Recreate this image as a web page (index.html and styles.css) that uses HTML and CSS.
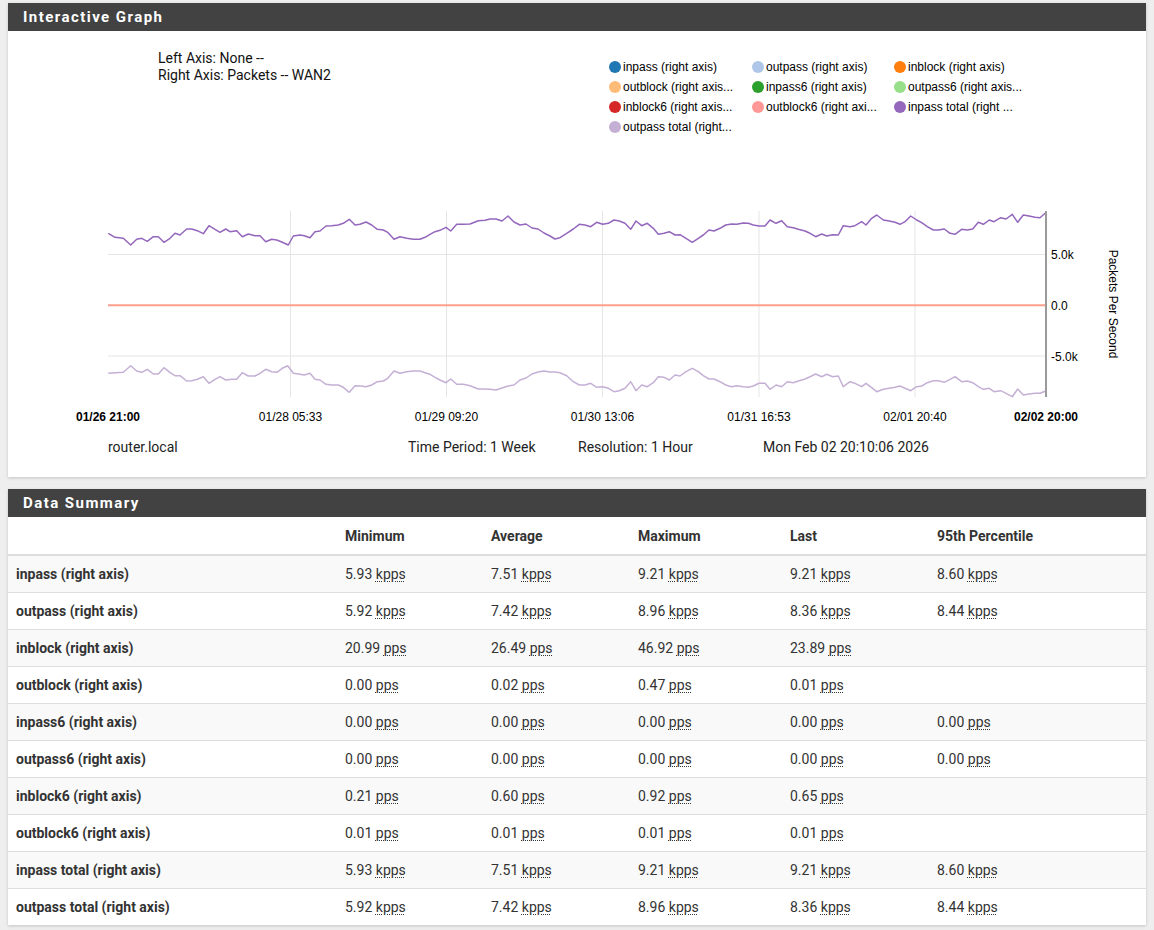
FILE: index.html
```html
<!DOCTYPE html>
<html lang="en">
<head>
<meta charset="utf-8">
<title>Interactive Graph</title>
<link rel="stylesheet" href="styles.css">
</head>
<body>
<div class="page">
  <section class="panel">
    <div class="panel-heading"><h2 class="panel-title">Interactive Graph</h2></div>
    <div class="graph-body">
      <div class="graph-head">
        <div class="axis-info">
          <div>Left Axis: None --</div>
          <div>Right Axis: Packets -- WAN2</div>
        </div>
        <ul class="legend">
          <li class="legend-item"><span class="dot c-inpass"></span>inpass (right axis)</li>
          <li class="legend-item"><span class="dot c-outpass"></span>outpass (right axis)</li>
          <li class="legend-item"><span class="dot c-inblock"></span>inblock (right axis)</li>
          <li class="legend-item"><span class="dot c-outblock"></span>outblock (right axis...</li>
          <li class="legend-item"><span class="dot c-inpass6"></span>inpass6 (right axis)</li>
          <li class="legend-item"><span class="dot c-outpass6"></span>outpass6 (right axis...</li>
          <li class="legend-item"><span class="dot c-inblock6"></span>inblock6 (right axis...</li>
          <li class="legend-item"><span class="dot c-outblock6"></span>outblock6 (right axi...</li>
          <li class="legend-item"><span class="dot c-intotal"></span>inpass total (right ...</li>
          <li class="legend-item"><span class="dot c-outtotal"></span>outpass total (right...</li>
        </ul>
      </div>
      <svg class="chart" width="1138" height="230" viewBox="8 200 1138 230" xmlns="http://www.w3.org/2000/svg">
        <g class="grid">
          <line x1="108" y1="254.5" x2="1046" y2="254.5"/>
          <line x1="108" y1="305.5" x2="1046" y2="305.5"/>
          <line x1="108" y1="356" x2="1046" y2="356"/>
          <line x1="290.5" y1="211" x2="290.5" y2="397"/>
          <line x1="446.5" y1="211" x2="446.5" y2="397"/>
          <line x1="602.5" y1="211" x2="602.5" y2="397"/>
          <line x1="759" y1="211" x2="759" y2="397"/>
          <line x1="915" y1="211" x2="915" y2="397"/>
        </g>
        <line class="zero-line" x1="108" y1="305.3" x2="1046" y2="305.3"/>
        <polyline class="series-in" points="108.3,233.3 115,237.3 123.3,238.3 130.7,245 136.7,239.3 141.7,238.3 147.3,241.3 153.3,236.7 158.3,236.7 164,242.3 170,238.3 175,233.3 180,235 186.7,229 191.7,229 197.3,230.7 203.3,233.7 209,225.7 215,229.3 220,232.3 225.7,229 230,231.7 236.7,230.7 242.3,236.7 248.3,234 255,235.7 260,235.7 265.7,241.7 271.7,239.3 276.7,240 282.3,242.3 288.3,245 293.3,236 300,235 304.3,235.7 310,237.7 315,231.7 320,231 326,226 331.7,225.7 338.3,225 343.3,223.3 349.3,219.3 355,225 360,224.3 366,222 371.7,225 377.3,229.3 383.3,230 387.7,232.3 394,239.3 400,236.7 406.7,238.3 413.3,239.3 420,239.3 425,237.3 430,234.3 435,231.7 440,230.3 446,227.3 450.7,231 456.7,224.3 463.3,224.3 470,224 478.3,220.7 485,220.3 490,219 496,219 502,221 508,216 514,222 520,225 526,224 532,228 538,229 544,233 550,236 555,239 560,237.7 566.7,233.3 573.3,229 579.3,224.3 585,225 590.7,226.7 596.7,222.3 602.7,224.3 608.3,223.3 614,220 619.3,221 625,223.3 630.7,229.3 636,221 641.7,225.7 647.3,223.3 653.3,228.3 658.3,234.3 664,233.3 669.3,231.7 675,235 680,234.7 686,238.3 692.3,242.3 698.3,238.3 703.3,235 709,230 714,231 720,228.3 725.7,225 731.7,224 736.7,224.3 743.3,223 748.3,223.3 753.3,225 759,226 765,226 770,220 776,223.3 781.7,220.7 787.3,226.7 793.3,227.7 798.3,229.3 805,231 810,233.3 815.7,236.7 821.7,234 826.7,236 832.7,234.7 838.3,235 843.3,225.7 850,226.7 855,225.7 861.7,221.7 866,225 871.7,218.3 876.7,215 883.3,220 889.3,221 895,222.3 900,224.3 905,221.7 910.7,216 916.7,220 921.7,222.7 927.3,226.7 933.3,230 938.3,230 944.3,229 950,233.3 955,234.3 961.7,229.3 967.3,230 972.7,229 978.3,222.3 983.3,224.3 989.3,220 994,221.7 1000.7,217.7 1006,219 1012.3,214.3 1017.7,222.3 1023.3,215 1029,216 1035,217.3 1040,217.7 1045.7,212.7"/>
        <polyline class="series-out" points="108.3,373.3 123.3,372.3 130.7,365.7 136.7,371 141.7,372.3 147.3,369.3 153.3,374 158.3,374 164,367.7 170,372.7 175,375.7 180,375.7 186.7,381 191.7,380.7 197.3,379.3 203.3,376.7 209,383.3 215,379.3 220,376.7 225.7,380 231.7,379.3 236.7,379.3 242.3,372.7 248.3,376 255,376 260,373.3 265.7,369.3 271.7,371.7 276.7,372.3 282.3,368.3 287.7,365.7 293.3,373.3 300,374.3 304.3,375 310,373.3 315,379.3 320,380 326,384.3 331.7,385 338.3,385 343.3,387.3 349.3,392.3 355,385.7 360.7,386 366,386.7 371.7,385 377.3,381.7 383.3,381 387.7,378.3 394,371 400,373.3 406.7,371.7 413.3,371 420,371 425,372.7 430,374.3 435,377.3 440,380 446,382.7 450.7,379 456.7,384.3 463.3,384.3 470,385.7 478.3,389 485,389 490,389.3 496,390 502,388 508,386 514,385 520,380 526,378 532,374 538,372 544,371 550,372 555,372 560,372.7 566.7,375.7 573.3,381.7 579.3,385 585,385 590.7,383.3 596.7,387.3 602.7,386.7 608.3,388.3 614,391.7 619.3,390.7 625,388.3 630.7,381.7 636,390.7 641.7,385 647.3,386.7 653.3,382.7 658.3,376.7 664,377.3 669.3,380 675,375 680,376 686,371.7 692.3,368.3 698.3,371.7 703.3,375.7 709,379 714,379 720,381.7 725.7,385 731.7,386.7 736.7,385.7 743.3,386.7 748.3,387.3 753.3,386 759,383.3 765,383.3 770,389.3 776,385 781.7,386.7 787.3,381.7 793.3,382.7 798.3,381 805,379 810,376.7 815.7,374 821.7,376.7 826.7,374.3 832.7,376.7 838.3,376 843.3,386.7 850,381.7 855,383.3 861.7,386.7 866,383.3 871.7,387.7 876.7,391.7 883.3,389.3 889.3,388.3 895,387.3 900,386 905,388.3 910.7,390.7 916.7,386.7 921.7,386 927.3,382.7 933.3,380.7 938.3,380.7 944.3,382.3 950,379.3 955,376.7 961.7,381.7 967.3,381 972.7,382.7 978.3,386.7 983.3,389.3 989.3,388.3 994,391.7 1000.7,390.7 1006,393.3 1012.3,396.7 1017.7,389 1023.3,395 1029,394 1035,393.3 1040,393.3 1045.7,391"/>
        <line class="axis-line" x1="1046" y1="211" x2="1046" y2="397"/>
        <g class="tick-labels">
          <text x="1051" y="259">5.0k</text>
          <text x="1051" y="310">0.0</text>
          <text x="1051" y="360.5">-5.0k</text>
        </g>
        <text class="axis-label" transform="translate(1109,304) rotate(90)" text-anchor="middle">Packets Per Second</text>
        <g class="x-labels" text-anchor="middle">
          <text class="edge" x="108" y="421">01/26 21:00</text>
          <text x="290.5" y="421">01/28 05:33</text>
          <text x="446.5" y="421">01/29 09:20</text>
          <text x="602.5" y="421">01/30 13:06</text>
          <text x="759" y="421">01/31 16:53</text>
          <text x="915" y="421">02/01 20:40</text>
          <text class="edge" x="1046" y="421">02/02 20:00</text>
        </g>
      </svg>
      <div class="graph-foot">
        <span class="foot-host">router.local</span>
        <span class="foot-period">Time Period: 1 Week</span>
        <span class="foot-res">Resolution: 1 Hour</span>
        <span>Mon Feb 02 20:10:06 2026</span>
      </div>
    </div>
  </section>

  <section class="panel">
    <div class="panel-heading"><h2 class="panel-title">Data Summary</h2></div>
    <table class="summary">
      <colgroup>
        <col class="col-label"><col class="col-min"><col class="col-avg"><col class="col-max"><col class="col-last"><col class="col-p95">
      </colgroup>
      <thead>
        <tr><th></th><th>Minimum</th><th>Average</th><th>Maximum</th><th>Last</th><th>95th Percentile</th></tr>
      </thead>
      <tbody>
        <tr><td class="row-label">inpass (right axis)</td><td>5.93 <abbr class="unit" title="Kilo-packets per second">kpps</abbr></td><td>7.51 <abbr class="unit" title="Kilo-packets per second">kpps</abbr></td><td>9.21 <abbr class="unit" title="Kilo-packets per second">kpps</abbr></td><td>9.21 <abbr class="unit" title="Kilo-packets per second">kpps</abbr></td><td>8.60 <abbr class="unit" title="Kilo-packets per second">kpps</abbr></td></tr>
        <tr><td class="row-label">outpass (right axis)</td><td>5.92 <abbr class="unit" title="Kilo-packets per second">kpps</abbr></td><td>7.42 <abbr class="unit" title="Kilo-packets per second">kpps</abbr></td><td>8.96 <abbr class="unit" title="Kilo-packets per second">kpps</abbr></td><td>8.36 <abbr class="unit" title="Kilo-packets per second">kpps</abbr></td><td>8.44 <abbr class="unit" title="Kilo-packets per second">kpps</abbr></td></tr>
        <tr><td class="row-label">inblock (right axis)</td><td>20.99 <abbr class="unit" title="Packets per second">pps</abbr></td><td>26.49 <abbr class="unit" title="Packets per second">pps</abbr></td><td>46.92 <abbr class="unit" title="Packets per second">pps</abbr></td><td>23.89 <abbr class="unit" title="Packets per second">pps</abbr></td><td></td></tr>
        <tr><td class="row-label">outblock (right axis)</td><td>0.00 <abbr class="unit" title="Packets per second">pps</abbr></td><td>0.02 <abbr class="unit" title="Packets per second">pps</abbr></td><td>0.47 <abbr class="unit" title="Packets per second">pps</abbr></td><td>0.01 <abbr class="unit" title="Packets per second">pps</abbr></td><td></td></tr>
        <tr><td class="row-label">inpass6 (right axis)</td><td>0.00 <abbr class="unit" title="Packets per second">pps</abbr></td><td>0.00 <abbr class="unit" title="Packets per second">pps</abbr></td><td>0.00 <abbr class="unit" title="Packets per second">pps</abbr></td><td>0.00 <abbr class="unit" title="Packets per second">pps</abbr></td><td>0.00 <abbr class="unit" title="Packets per second">pps</abbr></td></tr>
        <tr><td class="row-label">outpass6 (right axis)</td><td>0.00 <abbr class="unit" title="Packets per second">pps</abbr></td><td>0.00 <abbr class="unit" title="Packets per second">pps</abbr></td><td>0.00 <abbr class="unit" title="Packets per second">pps</abbr></td><td>0.00 <abbr class="unit" title="Packets per second">pps</abbr></td><td>0.00 <abbr class="unit" title="Packets per second">pps</abbr></td></tr>
        <tr><td class="row-label">inblock6 (right axis)</td><td>0.21 <abbr class="unit" title="Packets per second">pps</abbr></td><td>0.60 <abbr class="unit" title="Packets per second">pps</abbr></td><td>0.92 <abbr class="unit" title="Packets per second">pps</abbr></td><td>0.65 <abbr class="unit" title="Packets per second">pps</abbr></td><td></td></tr>
        <tr><td class="row-label">outblock6 (right axis)</td><td>0.01 <abbr class="unit" title="Packets per second">pps</abbr></td><td>0.01 <abbr class="unit" title="Packets per second">pps</abbr></td><td>0.01 <abbr class="unit" title="Packets per second">pps</abbr></td><td>0.01 <abbr class="unit" title="Packets per second">pps</abbr></td><td></td></tr>
        <tr><td class="row-label">inpass total (right axis)</td><td>5.93 <abbr class="unit" title="Kilo-packets per second">kpps</abbr></td><td>7.51 <abbr class="unit" title="Kilo-packets per second">kpps</abbr></td><td>9.21 <abbr class="unit" title="Kilo-packets per second">kpps</abbr></td><td>9.21 <abbr class="unit" title="Kilo-packets per second">kpps</abbr></td><td>8.60 <abbr class="unit" title="Kilo-packets per second">kpps</abbr></td></tr>
        <tr><td class="row-label">outpass total (right axis)</td><td>5.92 <abbr class="unit" title="Kilo-packets per second">kpps</abbr></td><td>7.42 <abbr class="unit" title="Kilo-packets per second">kpps</abbr></td><td>8.96 <abbr class="unit" title="Kilo-packets per second">kpps</abbr></td><td>8.36 <abbr class="unit" title="Kilo-packets per second">kpps</abbr></td><td>8.44 <abbr class="unit" title="Kilo-packets per second">kpps</abbr></td></tr>
      </tbody>
    </table>
  </section>
</div>
</body>
</html>
```

FILE: styles.css
```css
* { box-sizing: border-box; }

html, body { margin: 0; padding: 0; }

body {
  background: #eeeeee;
  font-family: Roboto, "Liberation Sans", sans-serif;
  font-size: 14px;
  color: #333;
}

.page { padding: 3px 8px 0; }

.panel {
  background: #fff;
  box-shadow: 0 1px 3px rgba(0, 0, 0, 0.18);
  margin-bottom: 12px;
}

.panel-heading {
  background: #424242;
  height: 28px;
  padding: 0 15px;
  display: flex;
  align-items: center;
}

.panel-title {
  margin: 0;
  color: #fff;
  font-size: 15px;
  font-weight: 700;
  letter-spacing: 1.45px;
  line-height: 18px;
}

/* Graph panel */
.graph-body { padding: 19px 0 20px; }

.graph-head {
  display: flex;
  align-items: flex-start;
  padding-left: 150px;
}

.axis-info {
  width: 451px;
  font-size: 14px;
  line-height: 17px;
  color: #111;
}

.legend {
  list-style: none;
  margin: 7px 0 0;
  padding: 0;
  display: grid;
  grid-template-columns: 143px 142px 142px;
  grid-auto-rows: 20px;
  font-family: "Liberation Sans", Arial, sans-serif;
  font-size: 12px;
  color: #000;
}

.legend-item {
  display: flex;
  align-items: center;
  gap: 2px;
  white-space: nowrap;
}

.dot {
  width: 12px;
  height: 12px;
  border-radius: 50%;
  flex: none;
}

.c-inpass { background: #1f77b4; }
.c-outpass { background: #aec7e8; }
.c-inblock { background: #ff7f0e; }
.c-outblock { background: #ffbb78; }
.c-inpass6 { background: #2ca02c; }
.c-outpass6 { background: #98df8a; }
.c-inblock6 { background: #d62728; }
.c-outblock6 { background: #ff9896; }
.c-intotal { background: #9467bd; }
.c-outtotal { background: #c5b0d5; }

.chart {
  display: block;
  margin-top: 63px;
  font-family: "Liberation Sans", Arial, sans-serif;
  font-size: 12px;
}

.grid line { stroke: #e5e5e5; stroke-width: 1; }

.zero-line { stroke: #fca08c; stroke-width: 2; }

.series-in, .series-out {
  fill: none;
  stroke-width: 1.5;
  stroke-linejoin: round;
}
.series-in { stroke: #9467bd; }
.series-out { stroke: #c5b0d5; }

.axis-line { stroke: #9a9a9a; stroke-width: 2; }

.chart text { fill: #000; }
.x-labels .edge { font-weight: 700; }

.graph-foot {
  display: flex;
  margin-top: 7px;
  padding-left: 100px;
  line-height: 20px;
  font-size: 14px;
  color: #222;
}
.foot-host { width: 300px; }
.foot-period { width: 170px; }
.foot-res { width: 185px; }

/* Summary table */
.summary {
  width: 100%;
  border-collapse: collapse;
  table-layout: fixed;
}

.col-label { width: 329px; }
.col-min { width: 146px; }
.col-avg { width: 147px; }
.col-max { width: 152px; }
.col-last { width: 147px; }
.col-p95 { width: 217px; }

.summary th,
.summary td {
  padding: 8px;
  line-height: 20px;
  text-align: left;
  vertical-align: top;
  white-space: nowrap;
}

.summary thead th {
  padding-top: 9px;
  border-bottom: 2px solid #ddd;
  font-weight: 700;
}

.summary tbody td { border-top: 1px solid #ddd; }

.summary tbody tr:nth-child(odd) { background: #f9f9f9; }

.row-label { font-weight: 700; }

.unit {
  text-decoration: underline dotted;
  text-decoration-thickness: 1px;
  text-underline-offset: 2px;
  cursor: help;
}
```
